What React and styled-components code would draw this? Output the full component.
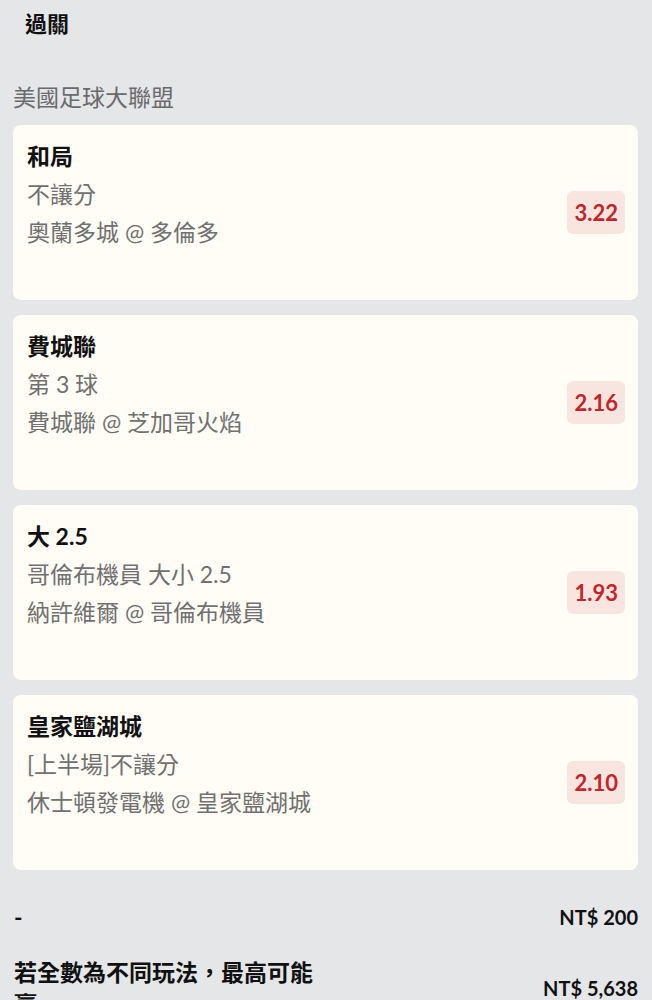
import React from 'react';
import styled, { createGlobalStyle } from 'styled-components';

const GlobalStyle = createGlobalStyle`
  body {
    margin: 0;
    background: #e5e6e8;
    font-family: Lato, "Noto Sans CJK TC", sans-serif;
  }
`;

const Page = styled.div`
  width: 652px;
  min-height: 1000px;
  background: #e5e6e8;
  color: #111;
`;

const Header = styled.div`
  padding: 8px 25px 0;
  font-size: 22px;
  font-weight: bold;
  line-height: 32px;
`;

const League = styled.div`
  margin-top: 41px;
  padding: 0 13px;
  font-size: 23px;
  line-height: 32px;
  color: #6a6a6a;
`;

const CardList = styled.div`
  display: flex;
  flex-direction: column;
  gap: 15px;
  margin-top: 12px;
  padding: 0 14px 0 13px;
`;

const Card = styled.div`
  box-sizing: border-box;
  height: 175px;
  display: flex;
  align-items: center;
  justify-content: space-between;
  padding: 0 13px 0 14px;
  background: #fffdf5;
  border-radius: 8px;
`;

const Info = styled.div`
  align-self: flex-start;
  padding-top: 12px;
  display: flex;
  flex-direction: column;
`;

const Pick = styled.div`
  font-size: 23px;
  font-weight: bold;
  line-height: 38px;
  color: #111;
`;

const Detail = styled.div`
  font-size: 23px;
  line-height: 38px;
  color: #707070;
`;

const Odds = styled.div`
  height: 43px;
  display: flex;
  align-items: center;
  padding: 0 7px;
  border-radius: 6px;
  background: #f8e5df;
  color: #c2262b;
  font-size: 22px;
  font-weight: bold;
`;

const Summary = styled.div`
  display: flex;
  flex-direction: column;
  gap: 23px;
  padding: 31px 14px 0;
`;

const SummaryRow = styled.div`
  display: flex;
  align-items: center;
  justify-content: space-between;
  font-weight: bold;
  font-size: 23px;
  line-height: 32px;
`;

const SummaryLabel = styled.div`
  width: ${(p) => (p.$narrow ? '310px' : 'auto')};
`;

const Amount = styled.div`
  font-size: 20px;
`;

const bets = [
  { pick: '和局', market: '不讓分', match: '奧蘭多城 @ 多倫多', odds: '3.22' },
  { pick: '費城聯', market: '第 3 球', match: '費城聯 @ 芝加哥火焰', odds: '2.16' },
  { pick: '大 2.5', market: '哥倫布機員 大小 2.5', match: '納許維爾 @ 哥倫布機員', odds: '1.93' },
  { pick: '皇家鹽湖城', market: '[上半場]不讓分', match: '休士頓發電機 @ 皇家鹽湖城', odds: '2.10' },
];

export default function App() {
  return (
    <Page>
      <GlobalStyle />
      <Header>過關</Header>
      <League>美國足球大聯盟</League>
      <CardList>
        {bets.map((b, idx) => (
          <Card key={idx}>
            <Info>
              <Pick>{b.pick}</Pick>
              <Detail>{b.market}</Detail>
              <Detail>{b.match}</Detail>
            </Info>
            <Odds>{b.odds}</Odds>
          </Card>
        ))}
      </CardList>
      <Summary>
        <SummaryRow>
          <SummaryLabel>-</SummaryLabel>
          <Amount>NT$ 200</Amount>
        </SummaryRow>
        <SummaryRow>
          <SummaryLabel $narrow>若全數為不同玩法，最高可能贏</SummaryLabel>
          <Amount>NT$ 5,638</Amount>
        </SummaryRow>
      </Summary>
    </Page>
  );
}
